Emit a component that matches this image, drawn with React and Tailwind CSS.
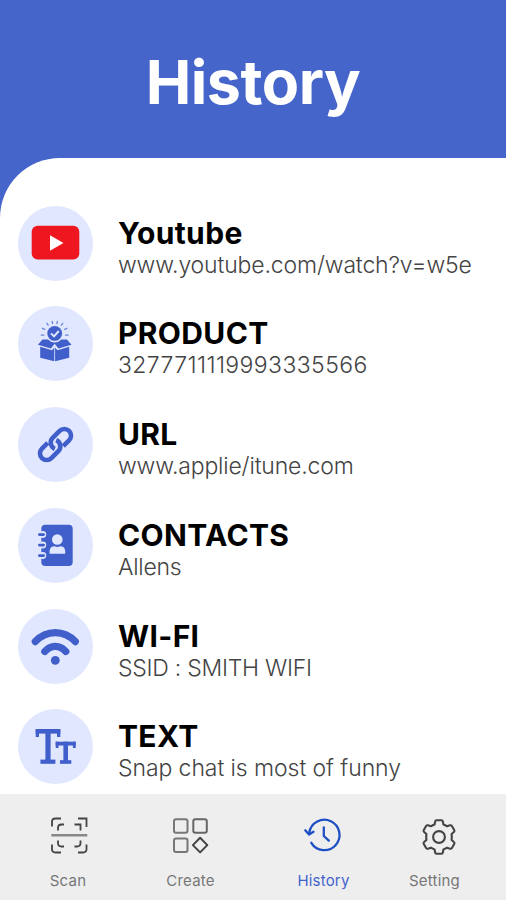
import { useState } from 'react';
import clsx from 'clsx';

const YoutubeIcon = () => (
  <>
    <rect x="13.7" y="19.7" width="47.6" height="33.8" rx="6" fill="#ee161f" />
    <path d="M32 29.2v15.6l13.4-7.8z" fill="#fff" />
  </>
);

const ProductIcon = () => (
  <>
    <circle cx="36.7" cy="27.4" r="7.4" />
    <path d="M33 27.4l3 3 4.8-5.4" fill="none" stroke="#e0e7ff" strokeWidth="2" />
    <path
      d="M22.8 29.2h3.6M47 29.2h3.6M24 22.2l3.2 1.5M46.2 23.7l3.2-1.5M28.5 16.8l2 2.8M43 19.6l2-2.8M34 15l.7 3M38.8 18l.7-3"
      fill="none"
      stroke="#6f86da"
      strokeWidth="1.3"
    />
    <path d="M24.5 33.4h5.5a9 9 0 0 0 13.4 0h5.5l4.6 5.4-13 3.6-3.8-4.6-3.8 4.6-13-3.6z" />
    <path d="M22.2 40.8l11.8 3.4 2.3-2.6v13.6l-14.1-3.4zM51.2 40.8l-11.8 3.4-2.3-2.6v13.6l14.1-3.4z" />
  </>
);

const UrlIcon = () => (
  <g transform="translate(37.5 37.5) rotate(-45) scale(1.06)" fill="none" stroke="#405fcb" strokeWidth="4.3">
    <path d="M4 6.3h7.8a6.3 6.3 0 0 0 0-12.6H2.5a6.3 6.3 0 0 0-5.8 8.7" />
    <path d="M-4-6.3h-7.8a6.3 6.3 0 0 0 0 12.6h9.3a6.3 6.3 0 0 0 5.8-8.7" />
  </g>
);

const ContactIcon = () => (
  <>
    <rect x="23.3" y="16.7" width="31.4" height="41.3" rx="4" />
    {[26.5, 37, 47.5].map((y) => (
      <g key={y}>
        <circle cx="24.8" cy={y} r="3.4" fill="#e0e7ff" />
        <rect x="20" y={y - 1.2} width="7" height="2.6" rx="1.3" />
      </g>
    ))}
    <circle cx="39.3" cy="31.5" r="5.3" fill="#e0e7ff" />
    <path d="M31.6 45.8v-2.2q0-5.4 5.2-5.4 2.6 1.4 5.2 0 5.2 0 5.2 5.4v2.2z" fill="#e0e7ff" />
  </>
);

const WifiIcon = () => (
  <>
    <path
      d="M17.3 32.6Q25.8 23.7 37.3 23.7T57.3 32.6M26.8 42.5Q31 37.3 37.3 37.3T47.8 42.5"
      fill="none"
      stroke="#405fcb"
      strokeWidth="7.2"
      strokeLinecap="round"
    />
    <circle cx="37.3" cy="51.3" r="4.4" />
  </>
);

const TextIcon = () => (
  <>
    <rect x="17.7" y="20" width="24.6" height="4.6" />
    <rect x="17.7" y="20" width="3.3" height="8" />
    <rect x="39" y="20" width="3.3" height="8" />
    <rect x="27.4" y="20" width="5.2" height="34" />
    <rect x="22.4" y="50.6" width="15" height="4.2" />
    <rect x="37.7" y="32.7" width="20" height="3.8" />
    <rect x="37.7" y="32.7" width="2.8" height="6.3" />
    <rect x="54.9" y="32.7" width="2.8" height="6.3" />
    <rect x="45.4" y="32.7" width="4.6" height="21" />
    <rect x="42" y="51.2" width="11.3" height="3.6" />
  </>
);

const ScanIcon = () => (
  <g strokeWidth="1.8">
    <path d="M6 12.5V8q0-3.5 3.5-3.5H15M32 4.5h8.5v8.5M6 30.5V35q0 3.5 3.5 3.5H15M32 38.5h5q3.5 0 3.5-3.5v-4.5" />
    <path d="M12 16.5V14q0-3.5 3.5-3.5H18M28.5 10.5h6v6M12 26.5V29q0 3.5 3.5 3.5H18M28.5 32.5H31q3.5 0 3.5-3.5v-2.5" />
    <path d="M5.3 21.2h36" stroke="#888" strokeWidth="2.4" />
  </g>
);

const CreateIcon = () => (
  <g strokeWidth="2">
    <rect x="5" y="5.3" width="13.5" height="13.5" rx="2" stroke="#777" />
    <rect x="24.3" y="5.3" width="13.5" height="13.5" rx="2" stroke="#666" />
    <rect x="5" y="24.4" width="13.5" height="13.5" rx="2" stroke="#777" />
    <path d="M31.1 23.8l7.2 7.3-7.2 7.3-7.2-7.3z" strokeLinejoin="round" />
  </g>
);

const HistoryIcon = () => (
  <g stroke="#1f4fc4" strokeWidth="2.3" strokeLinecap="round" strokeLinejoin="round">
    <path d="M7.3 18.5a15.2 15.2 0 1 1 2 10.3" />
    <path d="M3.3 16.3l3.7 4.2 4.5-2.7" />
    <path d="M21.8 13.5v8.5l5 4.6" />
  </g>
);

// Cog with six rounded teeth
const SettingIcon = () => (
  <g strokeWidth="2.1" strokeLinejoin="round">
    <path d="M23.6 6.3h4.8q1.3 0 1.5 1.3l.5 3q2 .6 3.6 1.7l3-1q1.2-.4 1.9.7l2.3 4q.7 1.2-.3 2l-2.3 2q.4 3 0 6l2.3 2q1 .8.3 2l-2.3 4q-.7 1.1-1.9.7l-3-1q-1.6 1.1-3.6 1.7l-.5 3q-.2 1.3-1.5 1.3h-4.8q-1.3 0-1.5-1.3l-.5-3q-2-.6-3.6-1.7l-3 1q-1.2.4-1.9-.7l-2.3-4q-.7-1.2.3-2l2.3-2q-.4-3 0-6l-2.3-2q-1-.8-.3-2l2.3-4q.7-1.1 1.9-.7l3 1q1.6-1.1 3.6-1.7l.5-3q.2-1.3 1.5-1.3z" />
    <circle cx="26" cy="23" r="5.9" />
  </g>
);

const historyItems = [
  { title: 'Youtube', detail: 'www.youtube.com/watch?v=w5e', icon: YoutubeIcon, spacing: 'tracking-[-0.15px]' },
  { title: 'PRODUCT', detail: '3277711119993335566', icon: ProductIcon, spacing: 'tracking-[0.4px]' },
  { title: 'URL', detail: 'www.applie/itune.com', icon: UrlIcon, spacing: 'tracking-[-0.18px]' },
  { title: 'CONTACTS', detail: 'Allens', icon: ContactIcon, spacing: 'tracking-[-0.25px]' },
  { title: 'WI-FI', detail: 'SSID : SMITH WIFI', icon: WifiIcon, spacing: 'tracking-[-0.26px]' },
  { title: 'TEXT', detail: 'Snap chat is most of funny', icon: TextIcon, spacing: 'tracking-[-0.08px]' },
];

const tabs = [
  { label: 'Scan', icon: ScanIcon, margin: 'ml-[13px]' },
  { label: 'Create', icon: CreateIcon, margin: 'ml-[12.5px]' },
  { label: 'History', icon: HistoryIcon, margin: 'ml-[23px]' },
  { label: 'Setting', icon: SettingIcon, margin: 'ml-px' },
];

function App() {
  const [activeTab, setActiveTab] = useState('History');

  return (
    <div className="h-[900px] w-[506px] flex flex-col overflow-hidden bg-[#4565cb] font-['Inter',sans-serif]">
      <header className="h-[157.5px] shrink-0 flex justify-center pt-[45px]">
        <h1 className="text-[61px] leading-[74px] font-bold tracking-[-0.5px] text-white">History</h1>
      </header>

      {/* History list */}
      <main className="flex-1 min-h-0 bg-white rounded-tl-[60px] pl-[18px] pt-[48px]">
        {historyItems.map(({ title, detail, icon: Icon, spacing }) => (
          <div key={title} className="h-[100.8px] flex items-start gap-[25px]">
            <div className="size-[75px] shrink-0 rounded-full bg-[#e0e7ff]">
              <svg viewBox="0 0 75 75" className="size-[75px]" fill="#405fcb">
                <Icon />
              </svg>
            </div>
            <div className="pt-[9px] whitespace-nowrap">
              <h2 className="text-[30px] leading-[36px] font-bold tracking-[0.35px] text-black">{title}</h2>
              <p className={clsx('text-[23px] leading-[28px] font-light text-[#444]', spacing)}>{detail}</p>
            </div>
          </div>
        ))}
      </main>

      {/* Bottom tabs */}
      <nav className="h-[106.5px] shrink-0 flex bg-[#eeeeee] pt-[20.5px]">
        {tabs.map(({ label, icon: Icon, margin }) => (
          <button
            key={label}
            onClick={() => setActiveTab(label)}
            className={clsx('w-[110px] shrink-0 flex flex-col items-center', margin)}
          >
            <svg viewBox="0 0 44 44" className="size-[44px] overflow-visible" fill="none" stroke="#444">
              <Icon />
            </svg>
            <span
              className={clsx(
                'mt-[14px] text-[15px] leading-[18px] tracking-[0.2px]',
                activeTab === label ? 'text-[#4463cc]' : 'text-[#777]'
              )}
            >
              {label}
            </span>
          </button>
        ))}
      </nav>
    </div>
  );
}

export default App;
